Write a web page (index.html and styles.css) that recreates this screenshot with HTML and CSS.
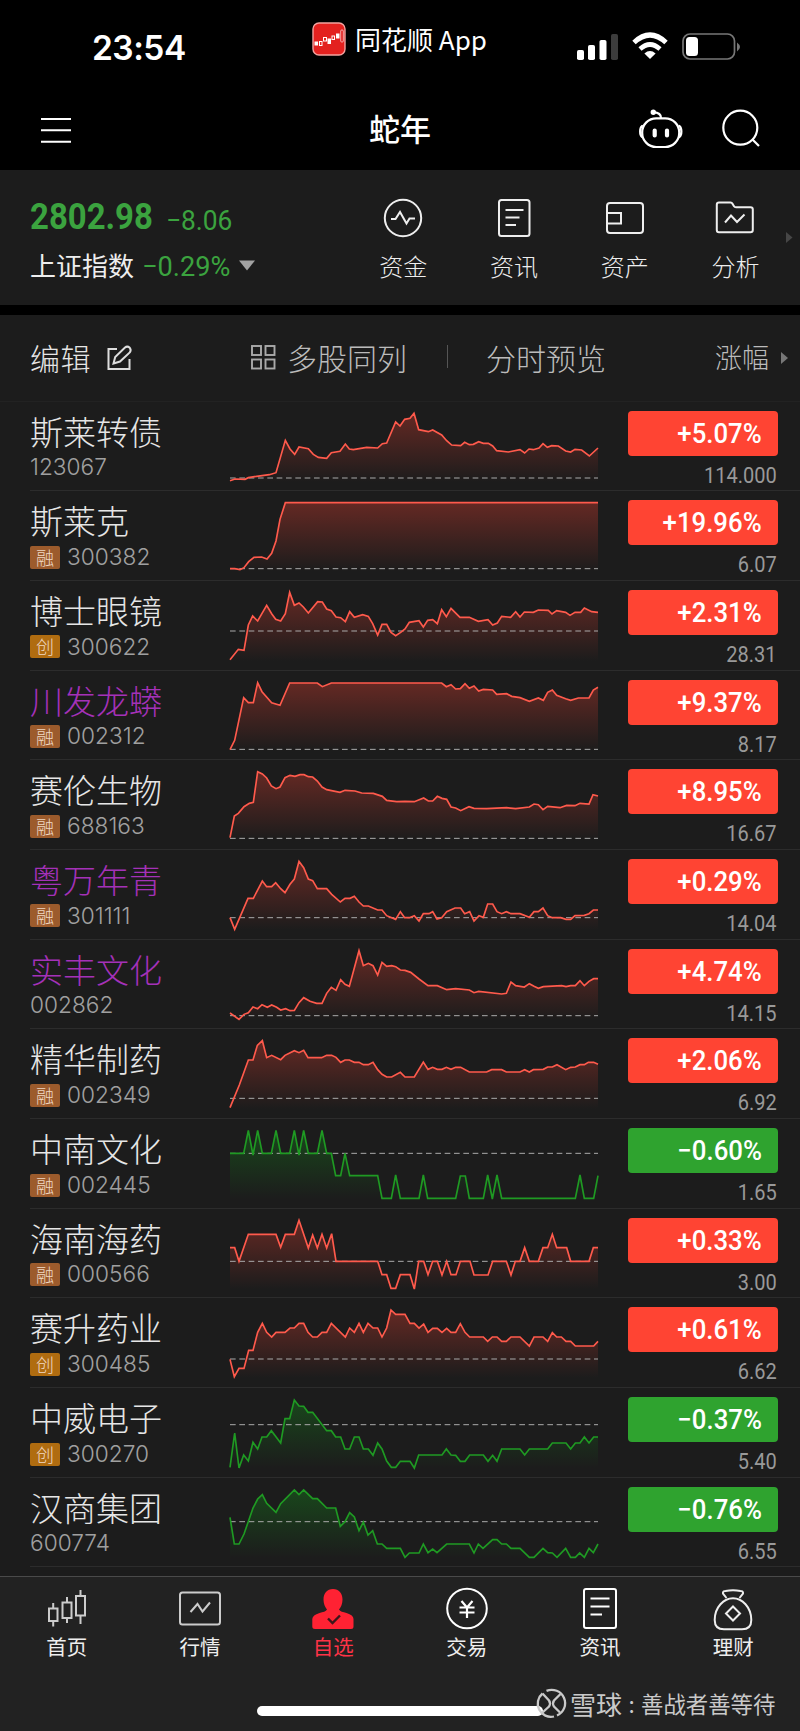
FILE: index.html
```html
<!DOCTYPE html>
<html lang="zh-CN">
<head>
    <meta charset="UTF-8">
    <meta name="viewport" content="width=device-width, initial-scale=1.0">
    <title>自选</title>
    <link rel="stylesheet" href="styles.css">
</head>
<body>
    <div class="status-bar">
        <div class="time">23:54</div>
        <div class="app-return">
            <svg width="34" height="34" viewBox="0 0 34 34">
                <rect x="1" y="1" width="32" height="32" rx="6" fill="#e3211f" stroke="#f3a29f" stroke-width="1.4"/>
                <g fill="none" stroke="#fff" stroke-width="1">
                    <rect x="3" y="20" width="2.5" height="3" fill="#fff"/>
                    <rect x="7.5" y="19.5" width="2.5" height="4"/>
                    <rect x="11.5" y="15.5" width="3" height="3.5"/>
                    <rect x="16" y="17" width="2.5" height="4.5" fill="#fff"/>
                    <rect x="20" y="14" width="2.5" height="3.5"/>
                    <rect x="24.5" y="12" width="2.5" height="4" fill="#fff"/>
                    <rect x="28.7" y="8" width="2.6" height="12" rx="1" stroke-width=".6"/>
                </g>
            </svg>
            <span>同花顺 App</span>
        </div>
        <div class="status-icons">
            <svg class="signal" width="42" height="28" viewBox="0 0 42 28" fill="#fff">
                <rect x="0" y="17" width="7" height="10" rx="1.8"/>
                <rect x="11" y="12" width="7" height="15" rx="1.8"/>
                <rect x="22.5" y="7" width="7" height="20" rx="1.8"/>
                <rect x="34" y="1" width="7" height="26" rx="1.8" fill="#3c3c3c"/>
            </svg>
            <svg class="wifi" width="36" height="27" viewBox="0 0 36 27">
                <path d="M2 9.5 Q18 -5.5 34 9.5" fill="none" stroke="#fff" stroke-width="5"/>
                <path d="M8 16 Q18 7 28 16" fill="none" stroke="#fff" stroke-width="4.6"/>
                <path d="M12.4 20.4 Q18 15.6 23.6 20.4 L18 26Z" fill="#fff"/>
            </svg>
            <svg class="battery" width="59" height="28" viewBox="0 0 59 28">
                <rect x="1" y="1" width="51.5" height="25" rx="7" fill="none" stroke="#777" stroke-width="1.7"/>
                <rect x="4" y="4" width="12" height="19" rx="3.5" fill="#fff"/>
                <path d="M55 9.5 Q61 14 55 18.5Z" fill="#777"/>
            </svg>
        </div>
    </div>

    <div class="nav-bar">
        <svg class="menu" width="30" height="26" viewBox="0 0 30 26" stroke="#fff" stroke-width="2">
            <path d="M0 2H30M0 13.3H30M0 24.8H30"/>
        </svg>
        <h1>蛇年</h1>
        <div class="nav-actions">
            <svg width="44" height="40" viewBox="0 0 44 40" fill="none" stroke="#fff" stroke-width="2.2" stroke-linecap="round">
                <rect x="3.2" y="9.3" width="37" height="28.7" rx="14"/>
                <path d="M3 17C.5 19 .5 26 3 28M40.5 17C43 19 43 26 40.5 28"/>
                <path d="M22 9C22 5 19 3.5 14.5 3.2"/>
                <circle cx="14.3" cy="3.2" r="1.6" fill="#fff"/>
                <path d="M15.7 21.5V26.5M28 21.5V26.5" stroke-width="4.2"/>
            </svg>
            <svg width="39" height="39" viewBox="0 0 39 39" fill="none" stroke="#fff" stroke-width="2.2">
                <circle cx="18.3" cy="18.7" r="17"/>
                <path d="M30.5 30.5L37 37"/>
            </svg>
        </div>
    </div>

    <div class="index-panel">
        <div class="index-info">
            <div class="index-row">
                <span class="index-value"><span class="din">2802.98</span></span>
                <span class="index-change"><span class="din">−8.06</span></span>
            </div>
            <div class="index-row second">
                <span class="index-name">上证指数</span>
                <span class="index-rate"><span class="din">−0.29%</span></span>
                <svg width="16" height="11" viewBox="0 0 16 11"><path d="M0 .5H16L8 10.5Z" fill="#a2a2a2"/></svg>
            </div>
        </div>
        <div class="quick-links">
            <div class="quick">
                <svg width="40" height="40" viewBox="0 0 40 40">
                    <circle cx="20" cy="20" r="18.2"/>
                    <path d="M8 21H12.5L17 14L23.5 25.5L26.5 20.5H32"/>
                </svg>
                <span>资金</span>
            </div>
            <div class="quick">
                <svg width="40" height="40" viewBox="0 0 40 40">
                    <rect x="5" y="2" width="30.5" height="36" rx="2.5"/>
                    <path d="M11.5 12H29.5M11.5 19.5H25.5M11.5 27H22"/>
                </svg>
                <span>资讯</span>
            </div>
            <div class="quick">
                <svg width="40" height="40" viewBox="0 0 40 40">
                    <rect x="2" y="5" width="36" height="30" rx="3"/>
                    <path d="M2 15H16V25.5H2"/>
                </svg>
                <span>资产</span>
            </div>
            <div class="quick">
                <svg width="40" height="40" viewBox="0 0 40 40">
                    <path d="M4 4.5H15.5Q17 4.5 17.5 5.8L19 8.2Q19.6 9.2 21 9.2H35.5Q37.8 9.2 37.8 11.5V32Q37.8 34.2 35.5 34.2H4Q1.8 34.2 1.8 32V6.8Q1.8 4.5 4 4.5Z"/>
                    <path d="M10 24.5L16 17.5L22 24L29.5 16.5"/>
                </svg>
                <span>分析</span>
            </div>
        </div>
        <svg class="more" width="7" height="11" viewBox="0 0 7 11"><path d="M0 0L6.5 5.5L0 11Z" fill="#464646"/></svg>
    </div>

    <div class="tool-bar">
        <span class="edit">编辑</span>
        <svg class="edit-icon" width="25" height="26" viewBox="0 0 25 26" fill="none" stroke="#ddd" stroke-width="2">
            <path d="M10 4H1.5V24H22.5V14"/>
            <path d="M6.5 18.5L8.2 12L18 2.5Q20.3 .6 22.8 2.8Q24.5 5 22.8 7.4L13 16.5Z"/>
        </svg>
        <svg class="grid-icon" width="25" height="25" viewBox="0 0 25 25" fill="none" stroke="#aaa" stroke-width="1.9">
            <rect x="1" y="1" width="9" height="9"/>
            <rect x="14.5" y="1" width="9" height="9"/>
            <rect x="1" y="14.5" width="9" height="9"/>
            <rect x="14.5" y="14.5" width="9" height="9"/>
        </svg>
        <span class="multi">多股同列</span>
        <span class="separator"></span>
        <span class="preview">分时预览</span>
        <span class="sort">涨幅</span>
        <svg class="sort-arrow" width="7" height="12" viewBox="0 0 7 12"><path d="M0 0L7 6L0 12Z" fill="#777"/></svg>
    </div>

    <svg class="defs" width="0" height="0">
        <linearGradient id="fill-up" x1="0" y1="0" x2="0" y2="1">
            <stop offset="0" stop-color="#ff4433" stop-opacity=".32"/>
            <stop offset="1" stop-color="#ff4433" stop-opacity="0"/>
        </linearGradient>
        <linearGradient id="fill-down" x1="0" y1="0" x2="0" y2="1">
            <stop offset="0" stop-color="#12a01a" stop-opacity=".32"/>
            <stop offset="1" stop-color="#12a01a" stop-opacity="0"/>
        </linearGradient>
    </svg>
    <div class="stock-list" id="stockList"></div>

    <div class="tab-bar">
        <div class="tab">
            <svg width="44" height="44" viewBox="0 0 44 44" stroke="#ccc">
                <rect x="4" y="19.5" width="8.5" height="12.5"/>
                <path d="M8.2 14V19M8.2 32V37.5"/>
                <rect x="17.5" y="13.5" width="9" height="15.5"/>
                <path d="M22 8V13.5M22 29V34"/>
                <rect x="31" y="7" width="9" height="19.5"/>
                <path d="M35.5 1V7M35.5 26.5V35"/>
            </svg>
            <span>首页</span>
        </div>
        <div class="tab">
            <svg width="44" height="44" viewBox="0 0 44 44" stroke="#ccc">
                <rect x="2" y="3.5" width="40" height="32" rx="2.5"/>
                <path d="M12.5 23L19.5 15L24.5 22.5L32 13.5"/>
            </svg>
            <span>行情</span>
        </div>
        <div class="tab active">
            <svg width="44" height="44" viewBox="0 0 44 44">
                <path class="solid" d="M22 0C28 0 31.5 4.5 31.5 10.5C31.5 15 30 18 28 20.5C29 22.5 32 23 35.5 24Q42.5 26 42.5 30V37.5Q42.5 40 40 40H4Q1.3 40 1.3 37.5V30Q1.5 26 8.5 24C12 23 15 22.5 16 20.5C14 18 12.5 15 12.5 10.5C12.5 4.5 16 0 22 0Z"/>
                <path d="M17 29.5L21.5 34L29 26.5" stroke="#3c171b" stroke-width="2.4"/>
            </svg>
            <span>自选</span>
        </div>
        <div class="tab">
            <svg width="44" height="44" viewBox="0 0 44 44" stroke="#fff">
                <circle cx="22" cy="19.5" r="19.8"/>
                <path d="M16.5 12L22 18.5L27.5 12M22 18.5V29M14.5 18.5H29.5M14.5 23.5H29.5" stroke-width="2.2"/>
            </svg>
            <span>交易</span>
        </div>
        <div class="tab">
            <svg width="44" height="44" viewBox="0 0 44 44" stroke="#fff">
                <rect x="6" y="0" width="32" height="39" rx="2"/>
                <path d="M12.5 9.5H31.5M12.5 17.5H31.5M12.5 25.5H24"/>
            </svg>
            <span>资讯</span>
        </div>
        <div class="tab">
            <svg width="44" height="44" viewBox="0 0 44 44" stroke="#eee">
                <path d="M15.5 9L12 4.5Q11.5 2 14.5 2Q22 .5 29.5 2Q32.5 2 32 4.5L28.5 9"/>
                <path d="M22 9.2C31 9.2 40.3 18 40.3 31Q40.3 40.3 31 40.3H13Q3.7 40.3 3.7 31C3.7 18 13 9.2 22 9.2Z"/>
                <path d="M22 17.5L29 24.5L22 31.5L15 24.5Z"/>
            </svg>
            <span>理财</span>
        </div>
    </div>

    <div class="home-indicator"></div>
    <div class="watermark">
        <svg width="29" height="29" viewBox="0 0 29 29" fill="none" stroke="#c9c9c9" stroke-width="2.3">
            <path d="M9.5 1.9A13.2 13.2 0 0 1 20 26.5M17 27.5A13.2 13.2 0 0 1 5.5 4.5"/>
            <path d="M5.5 4.5L12 11.5Q14 14.5 12 17.5L5 24"/>
            <path d="M23.5 5L17 11.5Q15 14.5 17 17.5L23 23.5"/>
        </svg>
        <span class="brand">雪球</span><span class="colon">:</span><span class="author">善战者善等待</span>
    </div>

    <script src="script.js"></script>
</body>
</html>
```
FILE: styles.css
```css
* {
    box-sizing: border-box;
}
body {
    margin: 0;
    width: 800px;
    height: 1731px;
    position: relative;
    overflow: hidden;
    background: #000;
    color: #e6e6e6;
    font-family: "Noto Sans CJK SC", sans-serif;
    font-weight: 300;
    line-height: 1;
}
svg {
    display: block;
    flex: none;
    overflow: visible;
}
span {
    white-space: nowrap;
}

/* Narrow digits */
.din {
    display: inline-block;
    font-family: Roboto, sans-serif;
    transform-origin: left center;
}

/* Status bar */
.status-bar {
    display: flex;
    height: 84px;
    color: #fff;
}
.time {
    width: 312px;
    padding: 32px 0 0 92px;
    font-family: Inter, sans-serif;
    font-weight: 600;
    font-size: 33.5px;
    letter-spacing: -0.5px;
}
.app-return {
    display: flex;
    width: 265px;
    padding-top: 22px;
    font-size: 26px;
    font-weight: 400;
}
.app-return span {
    padding: 4px 0 0 9px;
}
.status-icons {
    display: flex;
    padding-top: 33px;
}
.wifi {
    margin-left: 13px;
}
.battery {
    margin-left: 14px;
}

/* Nav bar */
.nav-bar {
    display: grid;
    grid-template-columns: 1fr 1fr 1fr;
    align-items: center;
    height: 86px;
    padding: 4px 41px 0;
}
.nav-bar .menu {
    margin-top: 2px;
}
.nav-bar h1 {
    margin: -3px 0 0;
    text-align: center;
    font-size: 31px;
    font-weight: 500;
    color: #fff;
}
.nav-actions {
    display: flex;
    justify-content: flex-end;
    gap: 39px;
    margin-right: -2px;
    padding-bottom: 1px;
}

/* Index panel */
.index-panel {
    display: flex;
    height: 135px;
    padding-left: 30px;
    background: #1c1c1c;
}
.index-info {
    width: 318px;
    padding-top: 28px;
}
.index-row {
    display: flex;
    align-items: flex-end;
    height: 37px;
    color: #3ba33f;
}
.index-row.second {
    align-items: center;
    height: 60px;
}
.index-value {
    width: 136px;
    font-size: 37px;
}
.index-value .din {
    font-weight: 700;
    transform: scaleX(.89);
}
.index-change {
    font-size: 28px;
}
.index-change .din {
    font-weight: 400;
    transform: scaleX(.94);
}
.index-name {
    width: 112px;
    font-size: 26px;
    font-weight: 400;
    color: #eee;
}
.index-rate {
    width: 97px;
    font-size: 28px;
}
.index-rate .din {
    font-weight: 400;
    transform: scaleX(.97);
}
.quick-links {
    display: flex;
    padding-top: 28px;
}
.quick {
    display: flex;
    flex-direction: column;
    align-items: center;
    gap: 16px;
    width: 110.7px;
    font-size: 24px;
    color: #eee;
}
.quick svg {
    fill: none;
    stroke: #eee;
    stroke-width: 2;
}
.more {
    margin: 62px 0 0 -5px;
}

/* Tool bar */
.tool-bar {
    display: flex;
    align-items: center;
    height: 87px;
    margin-top: 9.5px;
    padding: 0 0 2px 30px;
    background: #1c1c1c;
    border-bottom: 1px solid #222;
    font-size: 30px;
    color: #bbb;
}
.edit {
    width: 77px;
    color: #e6e6e6;
    letter-spacing: 0.5px;
}
.edit-icon {
    margin-top: 3px;
}
.grid-icon {
    margin: 2px 11px 0 119px;
}
.separator {
    width: 1px;
    height: 23px;
    margin: 0 38px 0 40px;
    background: #555;
}
.sort {
    margin-left: 109px;
    font-size: 27px;
}
.sort-arrow {
    margin: 2px 0 0 12px;
}
.defs {
    position: absolute;
}

/* Stock list */
.stock-list {
    background: #1c1c1c;
    height: 1174.5px;
}
.stock {
    display: flex;
    height: 89.7px;
    margin-left: 30px;
    border-bottom: 1.5px solid #2c2c2c;
}
.stock-info {
    width: 200px;
    padding-top: 13px;
}
.stock-name {
    height: 33px;
    font-size: 33px;
}
.stock-name.purple {
    color: #a431b8;
}
.stock-code {
    display: flex;
    align-items: center;
    height: 24px;
    margin-top: 8px;
    font-family: Inter, sans-serif;
    font-size: 22.7px;
    color: #a0a0a0;
}
.badge {
    width: 30px;
    height: 23px;
    margin-right: 7px;
    border-radius: 2px;
    background: #9c5b2c;
    color: #f0d9c4;
    font-family: "Noto Sans CJK SC", sans-serif;
    font-size: 18px;
    line-height: 22px;
    text-align: center;
}
.badge.gem {
    background: #b06c10;
}
.chart {
    width: 368px;
    height: 89.7px;
}
.chart .line {
    fill: none;
    stroke: #ff5a4c;
    stroke-width: 5;
}
.chart .area {
    fill: url(#fill-up);
}
.chart .base {
    stroke: #aaa;
    stroke-width: 3;
    stroke-dasharray: 17 11;
}
.chart.down .line {
    stroke: #1f9a23;
}
.chart.down .area {
    fill: url(#fill-down);
}
.stock-quote {
    width: 150px;
    margin-left: 30px;
    padding-top: 9px;
    text-align: right;
}
.stock-quote .din {
    transform-origin: right center;
}
.percent {
    height: 45px;
    padding: 6px 16px 0 0;
    border-radius: 4px;
    background: #ff4433;
    color: #fff;
    font-size: 28px;
}
.percent .din {
    font-weight: 500;
    transform: scaleX(.92);
}
.percent.down {
    background: #2fa32f;
}
.price {
    margin-top: 6px;
    padding-right: 1px;
    font-size: 22.5px;
    color: #999;
}
.price .din {
    font-weight: 400;
    transform: scaleX(.89);
}

/* Tab bar */
.tab-bar {
    display: flex;
    height: 155px;
    padding-top: 12px;
    background: #222;
    border-top: 1px solid #4a4a4a;
}
.tab {
    display: flex;
    flex-direction: column;
    align-items: center;
    gap: 3px;
    width: 133.33px;
    font-size: 20.5px;
    font-weight: 400;
    color: #eee;
}
.tab svg {
    fill: none;
    stroke-width: 2;
}
.tab.active {
    color: #ff3347;
}
.tab .solid {
    fill: #ff2233;
}
.home-indicator {
    position: absolute;
    left: 257px;
    top: 1706px;
    width: 286px;
    height: 10px;
    border-radius: 5px;
    background: #fff;
}

/* Watermark */
.watermark {
    position: absolute;
    left: 537px;
    top: 1689px;
    display: flex;
    align-items: center;
    height: 29px;
    color: #c9c9c9;
    font-size: 22.4px;
    font-weight: 400;
}
.brand {
    margin-left: 4px;
    font-size: 26px;
    font-weight: 400;
}
.colon {
    width: 19px;
    text-align: center;
}
```
FILE: script.js
```js
// Each row: name, code, badge, percent, price, baseline and intraday points.
// The chart box is 1104 x 269 units.
const stocks = [
    {
        name: "斯莱转债", code: "123067", percent: "+5.07%", price: "114.000", base: 228,
        points: "0,236 15,231 45,232 55,227 80,223 118,218 138,212 166,115 180,141 194,157 207,135 235,140 250,157 265,166 290,169 304,152 330,148 346,126 358,141 370,143 410,136 443,138 457,125 470,123 497,60 510,72 524,52 540,49 552,34 566,83 595,89 608,84 635,99 650,116 665,129 692,131 704,121 718,128 730,127 746,119 760,124 775,124 788,132 800,146 835,150 870,143 884,153 897,141 910,143 927,138 939,125 952,136 965,131 985,132 1007,147 1022,150 1035,142 1055,144 1078,162 1104,138"
    },
    {
        name: "斯莱克", code: "300382", badge: "融", percent: "+19.96%", price: "6.07", base: 233,
        points: "0,233 14,233 30,236 42,230 56,212 72,199 95,198 111,204 125,187 138,150 150,85 166,35 1104,35"
    },
    {
        name: "博士眼镜", code: "300622", badge: "创", percent: "+2.31%", price: "28.31", base: 150,
        points: "0,236 25,205 42,208 55,132 68,105 83,120 110,73 125,98 137,115 152,120 166,98 179,34 193,73 207,66 220,78 235,96 263,62 277,63 290,84 304,89 318,108 332,110 346,122 359,92 373,109 398,101 415,106 428,128 443,162 456,130 470,130 483,154 497,164 512,154 525,144 538,124 567,119 580,138 593,118 608,116 622,128 635,86 649,107 663,82 690,109 718,109 745,121 774,116 788,132 802,126 815,106 842,109 857,92 870,108 883,93 910,94 925,87 955,88 966,99 980,89 1007,94 1020,103 1035,94 1052,94 1063,81 1085,92 1104,94"
    },
    {
        name: "川发龙蟒", purple: true, code: "002312", badge: "融", percent: "+9.37%", price: "8.17", base: 235,
        points: "0,236 14,208 41,80 55,95 70,95 83,35 96,62 125,95 150,103 179,36 262,36 277,47 304,36 635,36 649,47 663,41 677,54 691,53 705,38 718,52 732,45 746,60 760,55 788,57 800,70 830,68 845,76 870,80 898,91 925,81 940,88 953,64 967,57 980,73 1007,83 1022,88 1045,81 1077,81 1090,57 1104,49"
    },
    {
        name: "赛伦生物", code: "688163", badge: "融", percent: "+8.95%", price: "16.67", base: 235,
        points: "0,233 13,168 25,160 42,140 58,130 70,127 83,35 97,42 110,54 124,78 138,86 150,81 165,53 180,46 195,49 210,44 222,44 235,50 248,51 262,63 276,81 290,89 330,97 345,91 375,93 395,99 430,100 457,109 470,121 500,125 525,124 553,125 581,114 595,123 608,123 622,109 636,115 650,118 663,141 677,144 692,152 717,140 732,145 770,146 830,143 857,146 898,141 912,132 925,134 939,149 953,139 990,143 1010,136 1035,137 1050,130 1077,132 1089,104 1104,108"
    },
    {
        name: "粤万年青", purple: true, code: "301111", badge: "融", percent: "+0.29%", price: "14.04", base: 203,
        points: "0,203 14,238 54,145 70,145 97,93 110,110 125,110 137,98 152,116 165,128 180,103 193,87 207,34 221,53 235,87 248,92 262,116 290,116 305,133 331,156 345,145 360,145 373,139 387,156 400,168 415,168 443,180 456,180 470,197 497,208 511,185 524,203 538,203 553,197 567,213 580,191 597,191 608,185 621,207 635,203 650,185 675,174 692,174 704,191 719,185 732,213 747,197 760,202 773,162 788,162 801,185 815,191 829,185 843,191 870,191 898,202 912,185 925,185 939,174 953,197 967,203 992,203 1008,208 1022,208 1035,197 1063,196 1077,191 1090,180 1104,180"
    },
    {
        name: "实丰文化", purple: true, code: "002862", percent: "+4.74%", price: "14.15", base: 227,
        points: "0,219 27,238 42,223 55,218 69,201 83,206 96,194 112,202 125,195 140,202 152,210 167,206 180,212 193,211 207,188 221,173 240,184 260,190 276,190 290,160 304,142 318,151 332,119 345,133 358,139 387,32 400,77 415,70 429,77 443,105 456,67 470,79 485,77 497,80 511,90 525,91 542,97 567,117 594,137 622,137 650,149 677,146 718,150 732,158 746,154 815,162 829,160 843,126 857,137 883,141 898,131 912,139 925,145 940,140 995,137 1008,140 1022,137 1036,137 1050,122 1063,137 1077,124 1091,116 1104,116"
    },
    {
        name: "精华制药", code: "002349", badge: "融", percent: "+2.06%", price: "6.92", base: 208,
        points: "0,236 28,168 55,93 69,93 82,49 97,35 110,86 125,79 152,92 165,79 193,65 207,71 221,64 234,86 275,86 290,79 305,79 318,85 332,100 345,93 358,93 373,100 387,100 400,107 415,107 429,100 443,122 456,136 470,144 485,144 511,130 525,144 553,144 580,99 594,121 608,115 622,121 636,121 649,115 663,121 677,115 692,115 718,129 770,129 785,122 815,122 829,129 870,129 884,122 898,129 910,122 940,121 953,114 967,114 981,107 1007,122 1022,115 1036,114 1050,107 1063,107 1075,100 1091,100 1104,106"
    },
    {
        name: "中南文化", code: "002445", badge: "融", percent: "−0.60%", price: "1.65", base: 103, down: true,
        points: "0,103 41,103 55,34 69,108 83,34 97,103 124,103 138,34 152,103 179,103 193,34 207,108 221,34 235,103 262,103 276,34 290,103 304,103 317,170 332,170 345,103 359,170 443,170 456,238 484,238 497,168 511,238 567,238 580,168 593,238 677,238 691,171 706,171 718,238 760,238 773,168 787,240 801,168 815,238 1036,238 1050,168 1063,238 1091,238 1104,170"
    },
    {
        name: "海南海药", code: "000566", badge: "融", percent: "+0.33%", price: "3.00", base: 157,
        points: "0,116 14,116 27,157 55,76 138,76 152,115 166,76 193,76 207,34 235,117 248,78 262,117 276,76 290,117 305,74 318,157 443,157 456,197 470,197 483,238 497,238 511,197 540,197 553,240 566,157 581,157 594,197 608,157 622,157 636,198 650,157 663,197 678,197 691,157 720,157 732,198 774,198 788,157 829,157 843,198 856,157 870,157 884,116 898,157 925,157 939,116 953,116 967,76 980,116 1010,116 1022,157 1077,157 1090,116 1104,116"
    },
    {
        name: "赛升药业", code: "300485", badge: "创", percent: "+0.61%", price: "6.62", base: 183,
        points: "0,184 13,236 27,211 42,211 56,157 69,157 83,103 97,76 110,103 125,117 138,103 165,103 180,90 193,90 207,76 221,76 234,103 248,117 262,117 276,103 290,103 304,76 346,117 359,90 373,103 387,76 400,103 414,76 429,90 443,90 456,117 470,90 483,36 497,49 525,49 540,76 553,76 567,90 581,78 594,103 608,91 622,91 636,103 650,91 663,103 677,103 691,77 705,103 719,117 760,117 773,130 787,117 801,117 815,130 829,130 843,117 870,117 898,144 912,117 939,117 953,130 967,104 980,117 994,117 1008,130 1022,130 1036,144 1091,144 1104,130"
    },
    {
        name: "中威电子", code: "300270", badge: "创", percent: "−0.37%", price: "5.40", base: 110, down: true,
        points: "0,238 14,135 27,240 41,201 55,219 69,163 83,183 96,147 110,147 124,128 152,165 165,92 179,92 193,36 207,54 221,55 234,73 248,73 290,128 304,128 317,147 332,147 345,183 359,183 373,147 387,147 400,183 415,183 429,202 443,165 456,183 470,219 484,238 497,238 511,220 540,220 553,240 566,201 636,201 649,183 663,201 677,202 691,220 705,220 719,201 760,201 774,220 788,202 801,220 815,183 870,183 884,201 898,183 953,183 967,165 1008,165 1022,183 1036,165 1050,165 1063,147 1077,165 1091,147 1104,147"
    },
    {
        name: "汉商集团", code: "600774", percent: "−0.76%", price: "6.55", base: 131, down: true,
        points: "0,118 13,198 27,198 42,168 69,90 83,63 97,50 110,76 138,103 152,77 193,36 207,50 221,36 248,62 262,62 290,90 317,90 331,145 345,131 359,104 373,117 387,158 400,132 414,171 428,158 442,198 456,198 470,211 511,211 525,238 538,225 567,225 580,198 594,224 608,213 621,224 650,198 718,198 732,225 745,198 759,211 788,185 801,185 815,198 829,198 843,211 870,211 898,238 912,238 939,211 953,224 967,225 981,238 1007,211 1022,238 1036,238 1049,225 1063,238 1077,211 1090,224 1104,198"
    }
];

function badgeHtml(badge) {
    if (!badge) return "";
    return `<span class="badge ${badge === "创" ? "gem" : ""}">${badge}</span>`;
}

document.getElementById("stockList").innerHTML = stocks.map(s => `
    <div class="stock">
        <div class="stock-info">
            <div class="stock-name ${s.purple ? "purple" : ""}">${s.name}</div>
            <div class="stock-code">${badgeHtml(s.badge)}<span>${s.code}</span></div>
        </div>
        <svg class="chart ${s.down ? "down" : ""}" viewBox="0 0 1104 269">
            <polygon class="area" points="0,240 ${s.points} 1104,240"/>
            <line class="base" x1="0" y1="${s.base}" x2="1104" y2="${s.base}"/>
            <polyline class="line" points="${s.points}"/>
        </svg>
        <div class="stock-quote">
            <div class="percent ${s.down ? "down" : ""}"><span class="din">${s.percent}</span></div>
            <div class="price"><span class="din">${s.price}</span></div>
        </div>
    </div>`).join("");
```
